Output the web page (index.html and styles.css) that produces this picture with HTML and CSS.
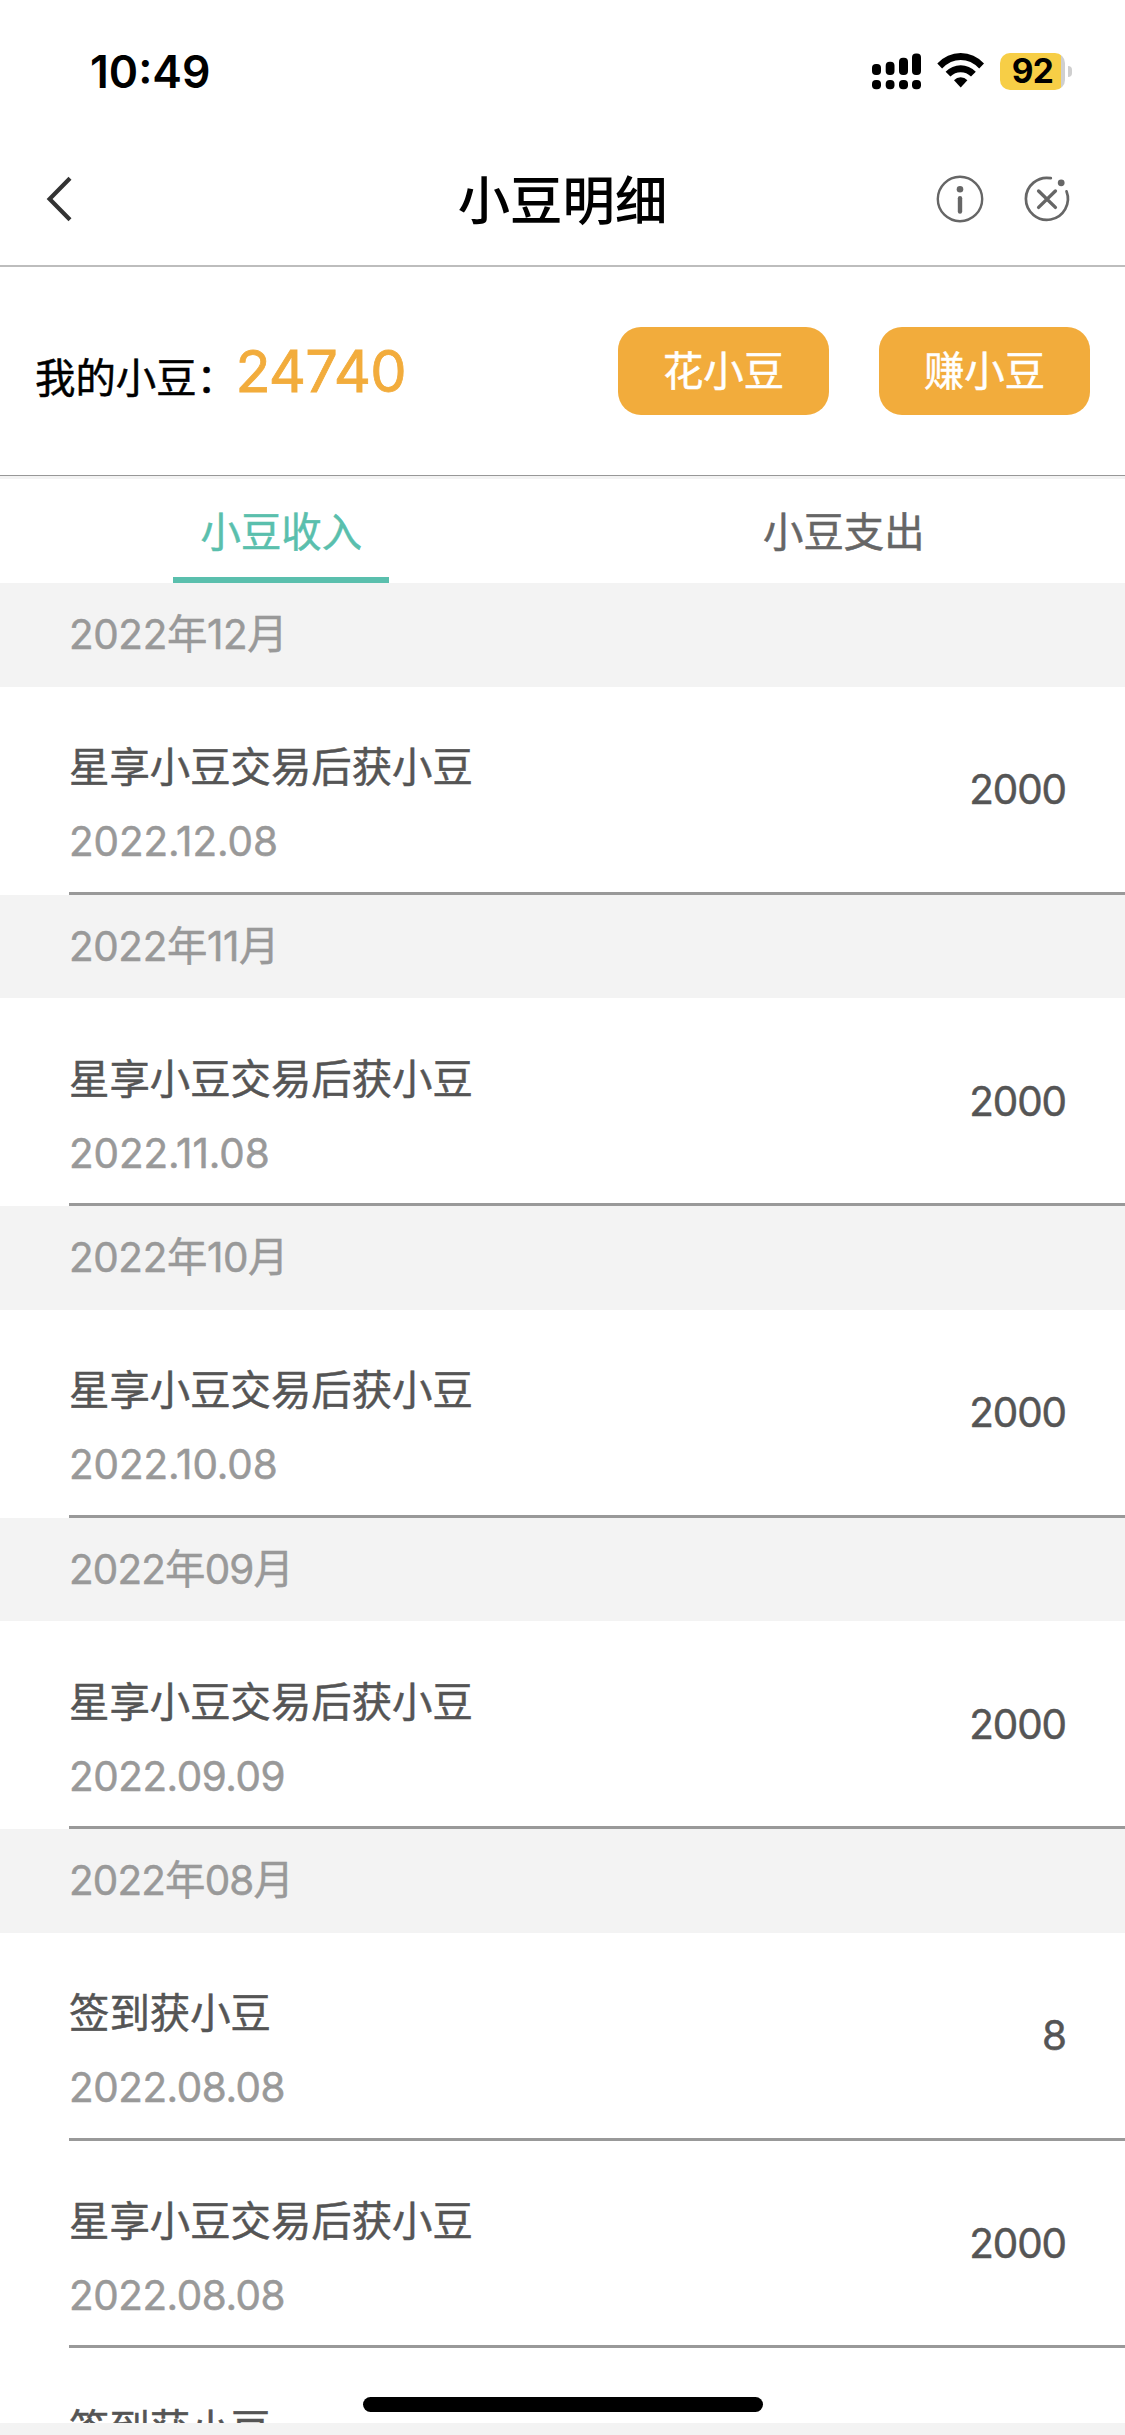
FILE: index.html
```html
<!DOCTYPE html>
<html lang="zh-CN">
<head>
<meta charset="utf-8">
<title>小豆明细</title>
<link rel="stylesheet" href="styles.css">
</head>
<body>
<div class="screen">
  <div class="status-bar">
    <span class="time">10:49</span>
    <div class="status-icons">
      <svg class="signal" width="50" height="38" viewBox="0 0 50 38">
        <rect x="0" y="12" width="9" height="11" rx="4"/><rect x="13.7" y="9.7" width="8.8" height="13.3" rx="4"/><rect x="27" y="5.7" width="9" height="17.3" rx="4"/><rect x="40" y="1.5" width="9" height="21.5" rx="4"/>
        <rect x="0" y="28" width="9" height="9.3" rx="4"/><rect x="13.7" y="28" width="8.8" height="9.3" rx="4"/><rect x="27" y="28" width="9" height="9.3" rx="4"/><rect x="40" y="28" width="9" height="9.3" rx="4"/>
      </svg>
      <svg class="wifi" width="48" height="38" viewBox="0 0 48 38">
        <path d="M0.3 11.6Q10 1 23.7 1T47 11.6L42.2 16.4Q34 8 23.7 8T5.1 16.4Z"/>
        <path d="M8.6 19.8Q15 13.2 23.7 13.2T38.8 19.8L34 24.6Q29.6 20.2 23.7 20.2T13.4 24.6Z"/>
        <path d="M17 28.3Q19.8 25.3 23.7 25.3T30.4 28.3L23.7 35.6Z"/>
      </svg>
      <div class="battery"><span class="battery-level">92</span></div>
      <span class="battery-cap"></span>
    </div>
  </div>
  <header class="nav">
    <svg class="back" width="30" height="50" viewBox="0 0 30 50"><path d="M26 4.2L5.6 25L26 45.8"/></svg>
    <h1 class="title">小豆明细</h1>
    <div class="nav-actions">
      <svg width="50" height="50" viewBox="0 0 50 50"><circle cx="25" cy="25" r="22.2" class="thin"/><circle cx="25" cy="15.2" r="3.3" class="dot"/><path d="M25 24.3V37.6" class="bar"/></svg>
      <svg width="50" height="50" viewBox="0 0 50 50"><path d="M28.8 4.2A21 21 0 1 0 44.5 17.3" class="arc"/><circle cx="39.2" cy="8.8" r="3.4" class="dot"/><path d="M16.6 17L33.4 33.4M33.4 17L16.6 33.4" class="cross"/></svg>
    </div>
  </header>
  <section class="summary">
    <span class="label">我的小豆：</span>
    <span class="balance">24740</span>
    <button class="pill">花小豆</button>
    <button class="pill">赚小豆</button>
  </section>
  <nav class="tabs">
    <div class="tab"><span class="tab-label active">小豆收入</span></div>
    <div class="tab"><span class="tab-label">小豆支出</span></div>
  </nav>
  <main class="list">
    <h2 class="month wide">2022年12月</h2>
    <div class="entry"><div class="info"><p class="name">星享小豆交易后获小豆</p><p class="date wide">2022.12.08</p></div><span class="amount">2000</span></div>
    <h2 class="month wide">2022年11月</h2>
    <div class="entry"><div class="info"><p class="name">星享小豆交易后获小豆</p><p class="date wide">2022.11.08</p></div><span class="amount">2000</span></div>
    <h2 class="month wide">2022年10月</h2>
    <div class="entry"><div class="info"><p class="name">星享小豆交易后获小豆</p><p class="date wide">2022.10.08</p></div><span class="amount">2000</span></div>
    <h2 class="month">2022年09月</h2>
    <div class="entry"><div class="info"><p class="name">星享小豆交易后获小豆</p><p class="date">2022.09.09</p></div><span class="amount">2000</span></div>
    <h2 class="month">2022年08月</h2>
    <div class="entry"><div class="info"><p class="name">签到获小豆</p><p class="date">2022.08.08</p></div><span class="amount">8</span></div>
    <div class="entry"><div class="info"><p class="name">星享小豆交易后获小豆</p><p class="date">2022.08.08</p></div><span class="amount">2000</span></div>
    <div class="entry"><div class="info"><p class="name">签到获小豆</p></div></div>
  </main>
  <div class="home-indicator"></div>
</div>
</body>
</html>
```
FILE: styles.css
```css
* { box-sizing: border-box; }
body, h1, h2, p { margin: 0; font-weight: 400; }
body {
  background: #f3f3f3;
  font-family: Inter, "Noto Sans CJK SC", sans-serif;
  font-size: 40.38px;
  -webkit-text-stroke-width: 0.5px;
}
.screen {
  position: relative;
  display: flex;
  flex-direction: column;
  width: 1125px;
  height: 2435px;
  overflow: hidden;
}
.status-bar {
  display: flex;
  flex: none;
  justify-content: space-between;
  align-items: center;
  height: 142px;
  padding: 0 53px 0 90px;
  background: #fff;
  -webkit-text-stroke-width: 0;
}
.time { padding-top: 2px; font-size: 44.5px; font-weight: 600; line-height: 60px; }
.status-icons { display: flex; align-items: center; }
.wifi { margin-left: 15px; }
.battery {
  display: flex;
  justify-content: center;
  align-items: center;
  width: 65px;
  height: 37px;
  margin-left: 15px;
  border-radius: 10px;
  background: linear-gradient(90deg, #f7ce46 61px, #cfcfcf 61px);
}
.battery-level { font-size: 33.5px; font-weight: 700; line-height: 37px; letter-spacing: -0.02em; }
.battery-cap {
  width: 4px;
  height: 11px;
  margin-left: 3px;
  border-radius: 0 5px 5px 0;
  background: #cfcfcf;
}
.nav {
  display: grid;
  flex: none;
  grid-template-columns: 1fr auto 1fr;
  align-items: center;
  height: 125px;
  padding: 0 53px 9px 44px;
  border-bottom: 2px solid #bdbdbd;
  background: #fff;
}
.back { fill: none; stroke: #333; stroke-width: 4.2; }
.title {
  padding: 3px 0 0 9px;
  font-size: 52.4px;
  font-weight: 500;
  line-height: 60px;
  color: #000;
  -webkit-text-stroke-width: 0;
}
.nav-actions { display: flex; justify-content: flex-end; gap: 37px; }
.nav-actions svg { fill: none; stroke: #666; stroke-linecap: round; }
.nav-actions .thin { stroke-width: 2.4; }
.nav-actions .arc { stroke-width: 2.7; }
.nav-actions .bar { stroke-width: 4.4; }
.nav-actions .cross { stroke-width: 3.4; }
.nav-actions .dot { fill: #666; stroke: none; }
.summary {
  display: flex;
  flex: none;
  align-items: center;
  height: 209px;
  padding: 0 35px;
  border-bottom: 1px solid #979797;
  background: #fff;
}
.label { padding-top: 16px; line-height: 60px; color: #000; }
.balance {
  margin-left: -1.5px;
  font-size: 57.7px;
  line-height: 70px;
  letter-spacing: -0.014em;
  color: #f2ac3c;
  -webkit-text-stroke-width: 0.8px;
}
.pill {
  width: 211px;
  height: 88px;
  margin-left: 50px;
  padding: 0 0 5px;
  border: 0;
  border-radius: 23px;
  background: #f2ac3c;
  color: #fff;
  font: inherit;
}
.balance + .pill { margin-left: auto; }
.tabs {
  display: grid;
  flex: none;
  grid-template-columns: 1fr 1fr;
  height: 107px;
  border-top: 3px solid #f3f3f3;
  background: #fff;
}
.tab { display: flex; justify-content: center; }
.tab-label {
  width: 216px;
  height: 104px;
  padding-top: 3px;
  border-bottom: 6px solid transparent;
  line-height: 101px;
  text-align: center;
  color: #666;
}
.tab-label.active { border-color: #5abfad; color: #5abfad; }
.list { height: 1840px; overflow: hidden; background: #fff; }
.month {
  height: 103.85px;
  padding-left: 69px;
  background: #f3f3f3;
  font-size: 40.38px;
  line-height: 104px;
  letter-spacing: -0.02em;
  color: #999;
}
.month.wide { letter-spacing: -0.009em; }
.entry {
  display: flex;
  justify-content: space-between;
  height: 207.7px;
  margin-left: 69px;
  padding: 51.5px 59px 0 0;
  border-bottom: 3px solid #999;
}
.name { line-height: 60px; color: #555; }
.date { margin-top: 14px; line-height: 60px; letter-spacing: -0.011em; color: #999; }
.date.wide { letter-spacing: -0.002em; }
.amount { line-height: 104px; letter-spacing: -0.027em; color: #555; }
.home-indicator {
  position: absolute;
  left: 363px;
  bottom: 23px;
  width: 400px;
  height: 15px;
  border-radius: 8px;
  background: #000;
}
```
